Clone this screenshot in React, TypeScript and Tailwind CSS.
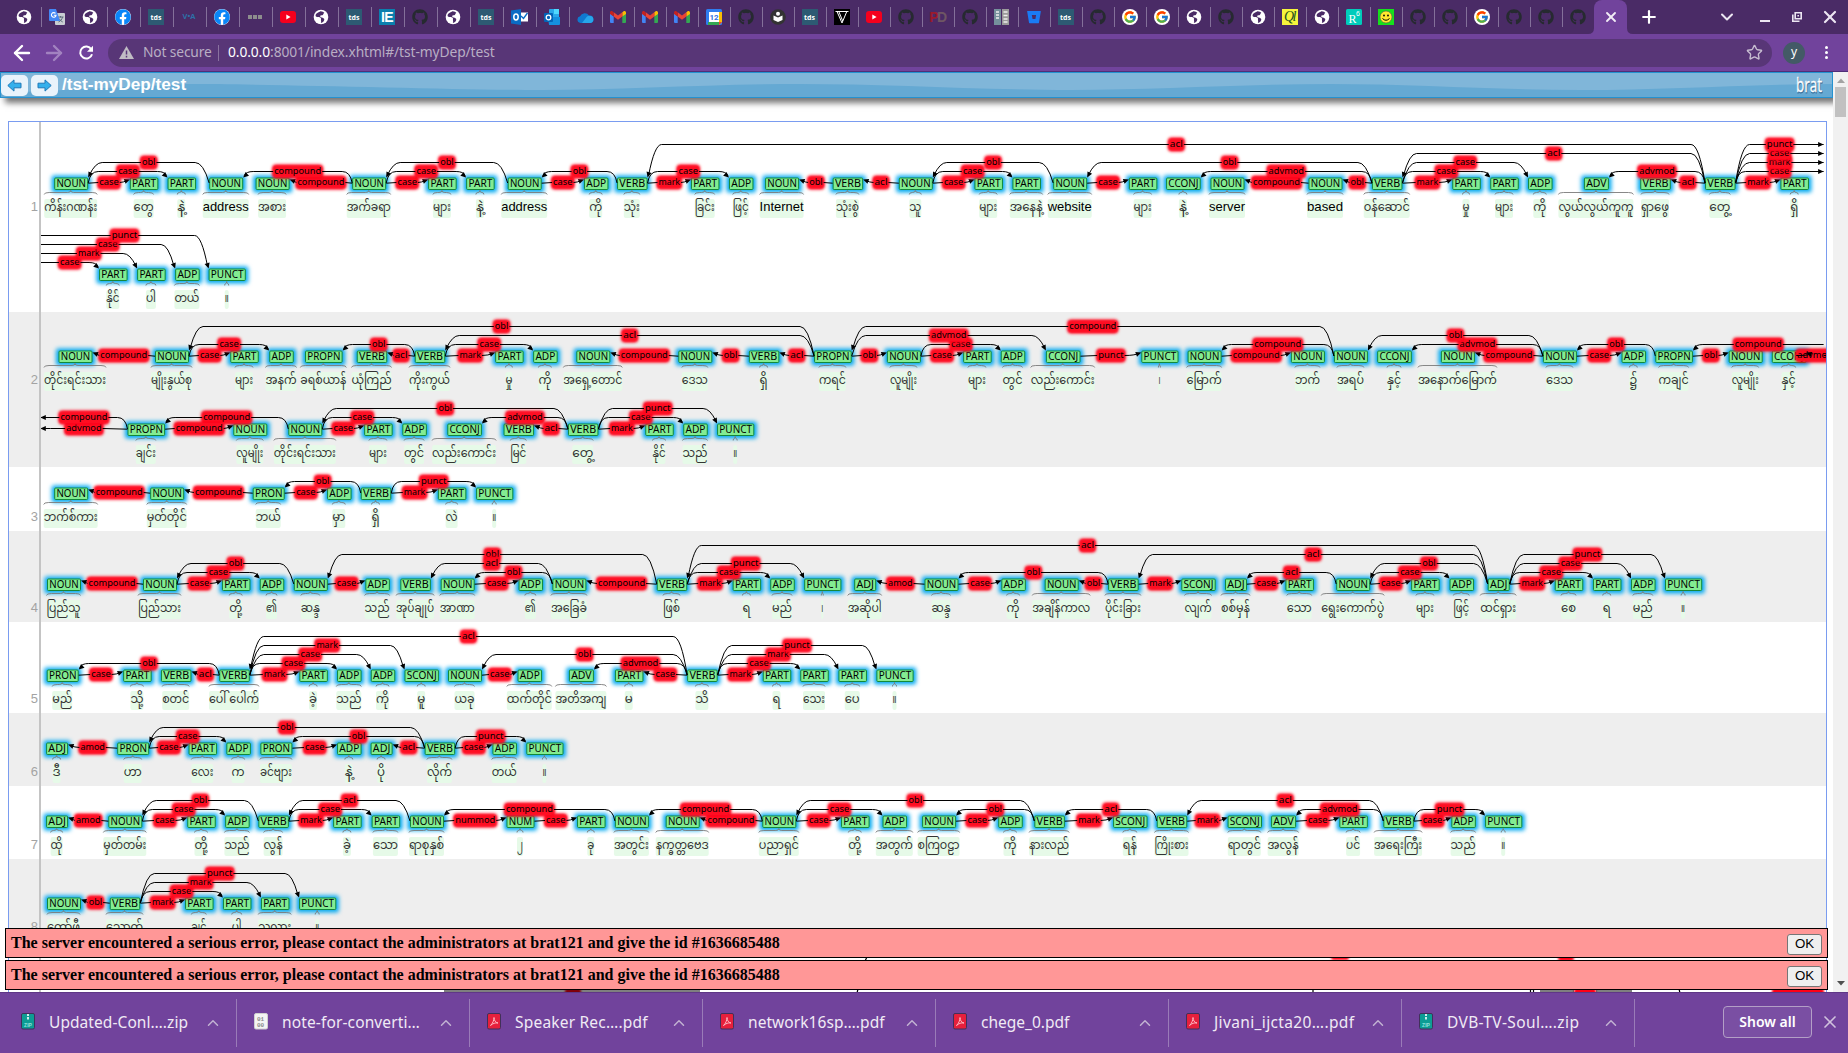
import React from "react";
import { FaGithub, FaFacebook, FaBitbucket } from "react-icons/fa";
import { FcGoogle } from "react-icons/fc";
import {
  ArrowLeft,
  ArrowRight,
  ChevronDown,
  ChevronUp,
  Plus,
  Star,
  X,
} from "lucide-react";

type Token = [tag: string, x: number, word: string, width: number];
type End = number | "L" | "R";
type Arc = [from: End, to: End, label: string, level: number];
type Line = { top: number; tokens: Token[]; arcs: Arc[] };
type Sentence = { n: number; top: number; height: number; lines: Line[] };

const TAG_W: Record<string, number> = {
  NOUN: 34, PART: 28.5, ADP: 24.5, VERB: 30.5, CCONJ: 34.6, PUNCT: 37.2, PROPN: 37.6,
  ADV: 25, PRON: 32, SCONJ: 34.4, ADJ: 22, NUM: 28,
};
const LABEL_W: Record<string, number> = {
  case: 19.5, obl: 13.5, compound: 47, mark: 21.5, acl: 13, advmod: 35.5, punct: 25.5, amod: 24.5, nummod: 40,
};
const LEFT = 40.3;
const RIGHT = 1823.6;

const SENTENCES: Sentence[] = [
  {
    n: 1, top: 122, height: 190,
    lines: [
      {
        top: 177,
        tokens: [
          ["NOUN", 71.2, "ကိန်းဂဏန်း", 53], ["PART", 144.1, "တွေ", 20], ["PART", 181.8, "နဲ့", 8],
          ["NOUN", 226.2, "address", 46], ["NOUN", 272.6, "အစား", 28], ["NOUN", 369.2, "အက်ခရာ", 44],
          ["PART", 442.4, "များ", 18], ["PART", 480.4, "နဲ့", 8], ["NOUN", 524.7, "address", 46],
          ["ADP", 596.2, "ကို", 13], ["VERB", 632.3, "သုံး", 16], ["PART", 705.2, "ခြင်း", 20],
          ["ADP", 741.2, "ဖြင့်", 16], ["NOUN", 782.1, "Internet", 44], ["VERB", 847.9, "သုံးစွဲ", 23],
          ["NOUN", 915.8, "သူ", 12], ["PART", 988.7, "များ", 18], ["PART", 1026.7, "အနေနဲ့", 33],
          ["NOUN", 1070.2, "website", 44], ["PART", 1143.1, "များ", 18], ["CCONJ", 1183.4, "နဲ့", 8],
          ["NOUN", 1227.5, "server", 36], ["NOUN", 1325.5, "based", 36], ["VERB", 1387.2, "ဝန်ဆောင်", 46],
          ["PART", 1466.5, "မှု", 7], ["PART", 1504.5, "များ", 18], ["ADP", 1540.3, "ကို", 13],
          ["ADV", 1596.4, "လွယ်လွယ်ကူကူ", 75], ["VERB", 1655.5, "ရှာဖွေ", 28], ["VERB", 1720.3, "တွေ့", 21],
          ["PART", 1794.7, "ရှိ", 8],
        ],
        arcs: [
          [0, 1, "case", 0], [0, 2, "case", 1], [3, 0, "obl", 2], [5, 4, "compound", 0], [5, 3, "compound", 1],
          [5, 6, "case", 0], [5, 7, "case", 1], [8, 5, "obl", 2], [8, 9, "case", 0], [10, 8, "obl", 1],
          [10, 11, "mark", 0], [10, 12, "case", 1], [14, 13, "obl", 0], [15, 14, "acl", 0], [15, 16, "case", 0],
          [15, 17, "case", 1], [18, 15, "obl", 2], [18, 19, "case", 0], [23, 22, "obl", 0], [22, 21, "compound", 0],
          [23, 20, "advmod", 1], [23, 18, "obl", 2], [23, 24, "mark", 0], [23, 25, "case", 1], [23, 26, "case", 2],
          [29, 23, "acl", 3], [29, 10, "acl", 4], [29, 28, "acl", 0], [29, 27, "advmod", 1], [29, 30, "mark", 0],
          [29, "R", "case", 1], [29, "R", "mark", 2], [29, "R", "case", 3], [29, "R", "punct", 4],
        ],
      },
      {
        top: 268,
        tokens: [["PART", 113.3, "နိုင်", 13], ["PART", 151.4, "ပါ", 10], ["ADP", 187.4, "တယ်", 25], ["PUNCT", 227.2, "။", 4]],
        arcs: [["L", 0, "case", 1], ["L", 1, "mark", 2], ["L", 2, "case", 3], ["L", 3, "punct", 4]],
      },
    ],
  },
  {
    n: 2, top: 312, height: 155,
    lines: [
      {
        top: 350,
        tokens: [
          ["NOUN", 75.5, "တိုင်းရင်းသား", 62], ["NOUN", 172, "မျိုးနွယ်စု", 41], ["PART", 244.5, "များ", 18],
          ["ADP", 281.5, "အနက်", 31], ["PROPN", 323.8, "ခရစ်ယာန်", 46], ["VERB", 372, "ယုံကြည်", 40],
          ["VERB", 430, "ကိုးကွယ်", 41], ["PART", 509.4, "မှု", 7], ["ADP", 545.4, "ကို", 13],
          ["NOUN", 593.3, "အရှေ့တောင်", 59], ["NOUN", 695.3, "ဒေသ", 26], ["VERB", 764.1, "ရှိ", 8],
          ["PROPN", 832.9, "ကရင်", 27], ["NOUN", 903.9, "လူမျိုး", 27], ["PART", 977.4, "များ", 18],
          ["ADP", 1013, "တွင်", 20], ["CCONJ", 1063.2, "လည်းကောင်း", 64], ["PUNCT", 1159.9, "၊", 2],
          ["NOUN", 1204.6, "မြောက်", 35], ["NOUN", 1307.9, "ဘက်", 25], ["NOUN", 1350.9, "အရပ်", 27],
          ["CCONJ", 1394.5, "နှင့်", 14], ["NOUN", 1457.9, "အနောက်မြောက်", 79], ["NOUN", 1559.9, "ဒေသ", 27],
          ["ADP", 1633.8, "၌", 8], ["PROPN", 1674.1, "ကချင်", 30], ["NOUN", 1745.7, "လူမျိုး", 27],
          ["CCONJ", 1789.1, "နှင့်", 14],
        ],
        arcs: [
          [1, 0, "compound", 0], [1, 2, "case", 0], [1, 3, "case", 1], [6, 5, "acl", 0], [6, 4, "obl", 1],
          [6, 7, "mark", 0], [6, 8, "case", 1], [12, 1, "obl", 3], [12, 6, "acl", 2], [10, 9, "compound", 0],
          [11, 10, "obl", 0], [12, 11, "acl", 0], [12, 13, "obl", 0], [13, 14, "case", 0], [13, 15, "case", 1],
          [12, 16, "advmod", 2], [16, 17, "punct", 0], [18, 19, "compound", 0], [20, 18, "compound", 1],
          [20, 12, "compound", 3], [23, 22, "compound", 0], [23, 21, "advmod", 1], [23, 20, "obl", 2],
          [23, 24, "case", 0], [25, 23, "obl", 1], [25, 26, "obl", 0], ["R", 25, "compound", 1],
          ["R", 27, "advmod", 0],
        ],
      },
      {
        top: 423,
        tokens: [
          ["PROPN", 146.3, "ချင်း", 20], ["NOUN", 250.3, "လူမျိုး", 27], ["NOUN", 305.3, "တိုင်းရင်းသား", 62],
          ["PART", 378.4, "များ", 18], ["ADP", 414.6, "တွင်", 20], ["CCONJ", 464.6, "လည်းကောင်း", 64],
          ["VERB", 518.8, "မြင်", 16], ["VERB", 583.2, "တွေ့", 21], ["PART", 659.5, "နိုင်", 13],
          ["ADP", 695.5, "သည်", 25], ["PUNCT", 735.7, "။", 4],
        ],
        arcs: [
          [0, "L", "advmod", 0], [0, "L", "compound", 1], [2, 0, "compound", 1], [0, 1, "compound", 0],
          [2, 3, "case", 0], [2, 4, "case", 1], [7, 2, "obl", 2], [7, 5, "advmod", 1], [7, 6, "acl", 0],
          [7, 8, "mark", 0], [7, 9, "case", 1], [7, 10, "punct", 2],
        ],
      },
    ],
  },
  {
    n: 3, top: 467, height: 64,
    lines: [
      {
        top: 487,
        tokens: [
          ["NOUN", 71.2, "ဘက်စ်ကား", 54], ["NOUN", 167.2, "မှတ်တိုင်", 40], ["PRON", 268.7, "ဘယ်", 25],
          ["ADP", 339.3, "မှာ", 13], ["VERB", 376, "ရှိ", 8], ["PART", 452.1, "လဲ", 12], ["PUNCT", 494.7, "။", 4],
        ],
        arcs: [
          [1, 0, "compound", 0], [2, 1, "compound", 0], [2, 3, "case", 0], [4, 2, "obl", 1], [4, 5, "mark", 0],
          [4, 6, "punct", 1],
        ],
      },
    ],
  },
  {
    n: 4, top: 531, height: 91,
    lines: [
      {
        top: 578,
        tokens: [
          ["NOUN", 64, "ပြည်သူ", 34], ["NOUN", 160, "ပြည်သား", 43], ["PART", 236.2, "တို့", 13], ["ADP", 272, "၏", 11],
          ["NOUN", 310.8, "ဆန္ဒ", 19], ["ADP", 377.6, "သည်", 25], ["VERB", 415.6, "အုပ်ချုပ်", 38],
          ["NOUN", 457.7, "အာဏာ", 35], ["ADP", 530.8, "၏", 11], ["NOUN", 569.4, "အခြေခံ", 36],
          ["VERB", 672, "ဖြစ်", 17], ["PART", 746.9, "ရ", 8], ["ADP", 782.5, "မည်", 20], ["PUNCT", 822.8, "၊", 2],
          ["ADJ", 865.2, "အဆိုပါ", 34], ["NOUN", 941.5, "ဆန္ဒ", 19], ["ADP", 1013.6, "ကို", 13],
          ["NOUN", 1061.7, "အချိန်ကာလ", 58], ["VERB", 1123.4, "ပိုင်းခြား", 36], ["SCONJ", 1198.5, "လျက်", 27],
          ["ADJ", 1236, "စစ်မှန်", 29], ["PART", 1299.7, "သော", 25], ["NOUN", 1353.2, "ရွေးကောက်ပွဲ", 63],
          ["PART", 1425.4, "များ", 18], ["ADP", 1461.8, "ဖြင့်", 16], ["ADJ", 1498.7, "ထင်ရှား", 36],
          ["PART", 1569, "စေ", 15], ["PART", 1607.2, "ရ", 8], ["ADP", 1643.3, "မည်", 20], ["PUNCT", 1683.6, "။", 4],
        ],
        arcs: [
          [1, 0, "compound", 0], [1, 2, "case", 0], [1, 3, "case", 1], [4, 1, "obl", 2], [4, 5, "case", 0],
          [10, 4, "obl", 3], [9, 6, "acl", 2], [9, 7, "obl", 1], [7, 8, "case", 0], [10, 9, "compound", 0],
          [10, 11, "mark", 0], [10, 12, "case", 1], [10, 13, "punct", 2], [15, 14, "amod", 0], [15, 16, "case", 0],
          [18, 15, "obl", 1], [18, 17, "obl", 0], [18, 19, "mark", 0], [20, 21, "case", 0], [22, 20, "acl", 1],
          [22, 23, "case", 0], [22, 24, "case", 1], [25, 22, "obl", 2], [25, 18, "acl", 3], [25, 10, "acl", 4],
          [25, 26, "mark", 0], [25, 27, "case", 1], [25, 28, "case", 2], [25, 29, "punct", 3],
        ],
      },
    ],
  },
  {
    n: 5, top: 622, height: 91,
    lines: [
      {
        top: 669,
        tokens: [
          ["PRON", 62.7, "မည်", 20], ["PART", 137.4, "သို့", 13], ["VERB", 176.2, "စတင်", 27],
          ["VERB", 234.5, "ပေါ် ပေါက်", 50], ["PART", 313.6, "ခဲ့", 8], ["ADP", 349.3, "သည်", 25],
          ["ADP", 383, "ကို", 13], ["SCONJ", 421.7, "မူ", 8], ["NOUN", 465, "ယခု", 20], ["ADP", 529.8, "ထက်တိုင်", 45],
          ["ADV", 581.4, "အတိအကျ", 51], ["PART", 629.2, "မ", 8], ["VERB", 702.4, "သိ", 13], ["PART", 777, "ရ", 8],
          ["PART", 814.5, "သေး", 22], ["PART", 852.7, "ပေ", 15], ["PUNCT", 895, "။", 4],
        ],
        arcs: [
          [0, 1, "case", 0], [3, 0, "obl", 1], [3, 2, "acl", 0], [3, 4, "mark", 0], [3, 5, "case", 1],
          [3, 6, "case", 2], [3, 7, "mark", 3], [12, 3, "acl", 4], [8, 9, "case", 0], [12, 8, "obl", 2],
          [12, 10, "advmod", 1], [12, 11, "case", 0], [12, 13, "mark", 0], [12, 14, "case", 1],
          [12, 15, "mark", 2], [12, 16, "punct", 3],
        ],
      },
    ],
  },
  {
    n: 6, top: 713, height: 73,
    lines: [
      {
        top: 742,
        tokens: [
          ["ADJ", 57.1, "ဒီ", 8], ["PRON", 133.2, "ဟာ", 18], ["PART", 202.8, "လေး", 22], ["ADP", 238.6, "က", 13],
          ["PRON", 276.4, "ခင်ဗျား", 32], ["ADP", 349.3, "နဲ့", 8], ["ADJ", 381.6, "ပို", 8],
          ["VERB", 439.9, "လိုက်", 25], ["ADP", 504.7, "တယ်", 25], ["PUNCT", 544.9, "။", 4],
        ],
        arcs: [
          [1, 0, "amod", 0], [1, 2, "case", 0], [1, 3, "case", 1], [7, 1, "obl", 2], [4, 5, "case", 0],
          [7, 4, "obl", 1], [7, 6, "acl", 0], [7, 8, "case", 0], [7, 9, "punct", 1],
        ],
      },
    ],
  },
  {
    n: 7, top: 786, height: 73,
    lines: [
      {
        top: 815,
        tokens: [
          ["ADJ", 57.1, "ထို", 12], ["NOUN", 125.3, "မှတ်တမ်း", 43], ["PART", 201.5, "တို့", 13],
          ["ADP", 237.4, "သည်", 25], ["VERB", 273.6, "လွန်", 19], ["PART", 347.4, "ခဲ့", 8], ["PART", 385.9, "သော", 25],
          ["NOUN", 427, "ရာစုနှစ်", 35], ["NUM", 520.5, "၂", 6], ["PART", 591.3, "ခု", 7], ["NOUN", 631.9, "အတွင်း", 35],
          ["NOUN", 682.7, "နက္ခတ္တဗေဒ", 53], ["NOUN", 779.3, "ပညာရှင်", 40], ["PART", 855.3, "တို့", 13],
          ["ADP", 894.8, "အတွက်", 37], ["NOUN", 939.1, "စကြဝဠာ", 42], ["ADP", 1010.5, "ကို", 13],
          ["VERB", 1049.6, "နားလည်", 40], ["SCONJ", 1130.3, "ရန်", 14], ["VERB", 1172, "ကြိုးစား", 34],
          ["SCONJ", 1244.8, "ရာတွင်", 33], ["ADV", 1283.6, "အလွန်", 31], ["PART", 1353.6, "ပင်", 14],
          ["VERB", 1398.6, "အရေးကြီး", 48], ["ADP", 1463.6, "သည်", 25], ["PUNCT", 1503.7, "။", 4],
        ],
        arcs: [
          [1, 0, "amod", 0], [1, 2, "case", 0], [1, 3, "case", 1], [4, 1, "obl", 2], [4, 5, "mark", 0],
          [4, 6, "case", 1], [7, 4, "acl", 2], [7, 8, "nummod", 0], [8, 9, "case", 0], [10, 7, "compound", 1],
          [12, 11, "compound", 0], [12, 10, "compound", 1], [12, 13, "case", 0], [12, 14, "case", 1],
          [17, 12, "obl", 2], [15, 16, "case", 0], [17, 15, "obl", 1], [17, 18, "mark", 0], [19, 17, "acl", 1],
          [19, 20, "mark", 0], [23, 19, "acl", 2], [23, 21, "advmod", 1], [21, 22, "case", 0], [23, 24, "case", 0],
          [23, 25, "punct", 1],
        ],
      },
    ],
  },
  {
    n: 8, top: 859, height: 82,
    lines: [
      {
        top: 897,
        tokens: [
          ["NOUN", 64, "ကော်ဖီ", 33], ["VERB", 125, "သောက်", 37], ["PART", 199.3, "ချင်", 15], ["PART", 237.2, "ပါ", 10],
          ["PART", 275.2, "သလား", 33], ["PUNCT", 317.7, "။", 4],
        ],
        arcs: [[1, 0, "obl", 0], [1, 2, "mark", 0], [1, 3, "case", 1], [1, 4, "mark", 2], [1, 5, "punct", 3]],
      },
    ],
  },
];

const TAG_FONT = '"Noto Sans", "Open Sans", sans-serif';
const WORD_FONT = '"Liberation Sans", "Noto Sans Myanmar", Padauk, sans-serif';
const ARROW_ANGLE = [-20, 42, 62, 70, 74];

function ArcShape({ arc, line }: { arc: Arc; line: Line }) {
  const [from, to, label, level] = arc;
  const centre = (e: End) => (e === "L" ? LEFT : e === "R" ? RIGHT : line.tokens[e][1]);
  const half = (e: End) => (typeof e === "number" ? TAG_W[line.tokens[e][0]] / 2 : 0);
  const dir = centre(to) > centre(from) ? 1 : -1;
  const x1 = centre(from) + dir * half(from);
  const x2 = centre(to) - dir * half(to);
  const mid = (x1 + x2) / 2;
  const lw = LABEL_W[label];
  const gap = lw / 2 + 1;
  const t = line.top;
  const y = level === 0 ? t + 5.5 : t - 5.5 - (level - 1) * 9;
  const flat = level === 1 ? 10 : 14;
  const startOpen = typeof from !== "number";
  const endOpen = typeof to !== "number";
  const ty = endOpen ? y : level === 0 ? t + 2.5 : t + 0.5;
  let head: string;
  let tail: string;
  if (level === 0) {
    tail = `M${x1} ${startOpen ? y : t + 6.2}L${mid - dir * gap} ${y}`;
    head = `M${mid + dir * gap} ${y}Q${x2 - dir * 7} ${y} ${x2 - dir * 2} ${ty + (endOpen ? 0 : 0.8)}`;
  } else {
    tail = startOpen
      ? `M${x1} ${y}H${mid - dir * gap}`
      : `M${x1} ${t + 6}Q${x1 + dir * (flat - 8)} ${y} ${x1 + dir * flat} ${y}H${mid - dir * gap}`;
    head = endOpen
      ? `M${mid + dir * gap} ${y}H${x2}`
      : `M${mid + dir * gap} ${y}H${x2 - dir * flat}Q${x2 - dir * (flat - 7)} ${y} ${x2 - dir} ${ty - 2}`;
  }
  const angle = endOpen ? 0 : ARROW_ANGLE[level];
  return (
    <g>
      <rect x={mid - lw / 2 - 2} y={y - 7} width={lw + 4} height={14} rx={4} fill="#ff0018" filter="url(#halo)" />
      <rect x={mid - lw / 2 - 1} y={y - 5.5} width={lw + 2} height={11} rx={3} fill="#ff0a20" filter="url(#soft)" />
      <path d={tail} fill="none" stroke="#000" />
      <path d={head} fill="none" stroke="#000" />
      <path d="M0 0L-5.5 -2.6V2.6Z" transform={`translate(${x2} ${ty}) scale(${dir} 1) rotate(${angle})`} />
      <text x={mid} y={y + 2.5} textAnchor="middle" fontSize={9.2} textLength={lw} lengthAdjust="spacingAndGlyphs" fontFamily={TAG_FONT}>
        {label}
      </text>
    </g>
  );
}

function TokenShape({ token, top }: { token: Token; top: number }) {
  const [tag, x, word, width] = token;
  const w = TAG_W[tag];
  const l = x - width / 2 - 0.5;
  const r = l + width;
  const c = (l + r) / 2;
  const b = top + 15.5;
  const k = Math.min(5, width / 4);
  const latin = /^[A-Za-z]/.test(word);
  return (
    <g>
      <rect x={l} y={top + 22} width={width} height={19} rx={2} fill="#e6fae8" />
      <rect x={x - w / 2 - 2.5} y={top - 1.5} width={w + 5} height={17} rx={2} fill="#00a8f0" filter="url(#glow)" />
      <rect x={x - w / 2 + 0.5} y={top + 1} width={w - 1} height={11.5} rx={1} fill="#83ec92" stroke="#12893a" />
      <text x={x} y={top + 10} textAnchor="middle" fontSize={10.4} textLength={w - 4.5} lengthAdjust="spacingAndGlyphs" fontFamily={TAG_FONT}>
        {tag}
      </text>
      <path
        d={`M${l} ${b + 2}Q${l} ${b} ${l + k} ${b}H${c - Math.min(3, k)}Q${c} ${b} ${c} ${b - 2}Q${c} ${b} ${c + Math.min(3, k)} ${b}H${r - k}Q${r} ${b} ${r} ${b + 2}`}
        fill="none"
        stroke="#7b7b7b"
        strokeWidth={0.9}
      />
      <text x={c} y={top + 34} textAnchor="middle" fontSize={13} textLength={width} lengthAdjust="spacingAndGlyphs" fontFamily={WORD_FONT} fill={latin ? "#000" : "#333"}>
        {word}
      </text>
    </g>
  );
}

function SentenceRow({ s }: { s: Sentence }) {
  return (
    <section className={s.n % 2 ? "bg-white" : "bg-[#eeeeee]"}>
      <svg className="block" width={1817} height={s.height} viewBox={`9 ${s.top} 1817 ${s.height}`}>
        {s.lines.map((line, i) => (
          <g key={i}>
            {line.tokens.map((tk, j) => (
              <TokenShape key={j} token={tk} top={line.top} />
            ))}
            {line.arcs.map((a, j) => (
              <ArcShape key={j} arc={a} line={line} />
            ))}
          </g>
        ))}
        <rect x={39} y={s.top} width={2} height={s.height} fill="#c4c4c4" />
        <text x={38} y={s.lines[0].top + 34} textAnchor="end" fontSize={13} fontFamily={WORD_FONT} fill="#a3a3a3">
          {s.n}
        </text>
      </svg>
    </section>
  );
}

function NextSentence() {
  return (
    <svg className="block" width={1817} height={52} viewBox="9 941 1817 52">
      <rect x={39} y={941} width={2} height={52} fill="#c4c4c4" />
      <g fill="#ff0018" filter="url(#soft)">
        <rect x={1331} y={955} width={18} height={5} rx={3} />
        <rect x={1558} y={956} width={16} height={5} rx={3} />
        <rect x={565} y={988} width={16} height={8} rx={3} />
        <rect x={1574} y={988} width={22} height={8} rx={3} />
        <rect x={1772} y={988} width={52} height={8} rx={3} />
      </g>
      <g stroke="#000" strokeWidth={1.2}>
        <path d="M444 991H700M1540 991H1574M1596 991H1632M867 957L865 961M858 989L857 993M1313 989V993M1530.500 989V993M1533.500 989V993M1679 989L1680 993" />
      </g>
    </svg>
  );
}

function Globe() {
  return (
    <svg width="16" height="16" viewBox="0 0 16 16">
      <circle cx="8" cy="8" r="7.300" fill="#fff" />
      <path d="M7.500 2.200C5.600 3 4.300 4 3 4.900c-.6 1.300-.6 2.200.3 2.900 1.500.7 3.200.2 4.300 1 .7.700.2 1.600.4 2.800.1.900.3 1.600-.2 2.300 2.100-.3 3.500-1.900 3.500-3.400 0-1.500-1.400-1.700-2.600-2.100-1.200-.3-1.900-.9-1.500-1.700.5-.7 1.800-.3 2.600-.8.9-.7.5-1.600 1.500-2.100-.7-.9-2.300-1.700-3.800-1.600Z" fill="#4a2b66" />
    </svg>
  );
}

function GmailIcon() {
  return (
    <svg width="16" height="12" viewBox="0 0 16 12">
      <path d="M0 2v9q0 1 1 1h2.700V5.500Z" fill="#4285f4" />
      <path d="M16 2v9q0 1-1 1h-2.700V5.500Z" fill="#34a853" />
      <path d="M12.300 1.200V5.500L16 3V1.600C16 .2 14.400-.4 13.400.4Z" fill="#fbbc04" />
      <path d="M3.700 5.500V1.200L8 4.500l4.300-3.300v4.300L8 8.700Z" fill="#ea4335" />
      <path d="M0 1.600V3l3.700 2.500V1.200L2.600.4C1.600-.4 0 .2 0 1.600Z" fill="#c5221f" />
    </svg>
  );
}

function TabIcon({ kind }: { kind: string }) {
  switch (kind) {
    case "globe":
      return <Globe />;
    case "gh":
      return <FaGithub size={16} color="#262a30" />;
    case "fb":
      return (
        <span className="flex size-4 items-center justify-center rounded-full bg-white">
          <FaFacebook size={16} color="#0a86f8" />
        </span>
      );
    case "yt":
      return (
        <svg width="16" height="12" viewBox="0 0 16 12">
          <rect width="16" height="12" rx="3" fill="#f5001d" />
          <path d="M6.300 3.500v5L10.600 6Z" fill="#fff" />
        </svg>
      );
    case "g":
      return (
        <span className="flex size-4 items-center justify-center rounded-full bg-white">
          <FcGoogle size={14} />
        </span>
      );
    case "gmail":
      return <GmailIcon />;
    case "tds":
      return (
        <span className="flex size-4 items-center justify-center bg-[#2d5a73] font-['Open_Sans'] text-[7px] font-bold leading-none text-white">tds</span>
      );
    case "voa":
      return <span className="font-['Open_Sans'] text-[7.500px] font-bold leading-none text-[#2d70a8]">V•A</span>;
    case "dots":
      return (
        <span className="flex gap-px">
          <i className="size-1 bg-[#8d8d8d]" />
          <i className="size-1 bg-[#8d8d8d]" />
          <i className="size-1 bg-[#8d8d8d]" />
        </span>
      );
    case "translate":
      return (
        <svg width="16" height="16" viewBox="0 0 16 16">
          <rect x="6" y="4" width="10" height="12" rx="1" fill="#c9cdd2" />
          <path d="M8.500 8h6M11.500 7v1.500M13.500 8c-.5 2.500-2 4-4 5M10 9.500c.8 1.500 2 2.500 3.700 3.500" stroke="#5c6b7a" fill="none" />
          <path d="M1 0h6l4 12H1q-1 0-1-1V1q0-1 1-1Z" fill="#4387f5" />
          <path d="M6.500 4.400A2.300 2.300 0 1 0 7 6.300H4.800" stroke="#fff" strokeWidth="1.100" fill="none" />
        </svg>
      );
    case "ie":
      return (
        <span className="flex size-4 items-center justify-center bg-[#0b7fae] font-['Liberation_Sans'] text-[14px] font-bold leading-none tracking-tighter text-white">IE</span>
      );
    case "outlook1":
      return (
        <svg width="17" height="16" viewBox="0 0 17 16">
          <rect x="8" y="3.500" width="9" height="9" fill="#fff" />
          <path d="M10 7l2.500 2.500L16.500 4" stroke="#0a6cc4" strokeWidth="1.400" fill="none" />
          <path d="M0 1.500L10 0v16L0 14.500Z" fill="#0a6cc4" />
          <ellipse cx="5" cy="8" rx="2.200" ry="2.900" stroke="#fff" strokeWidth="1.500" fill="none" />
        </svg>
      );
    case "outlook2":
      return (
        <svg width="16" height="16" viewBox="0 0 16 16">
          <rect x="5" y="0" width="10" height="9" rx="1" fill="#28a8ea" />
          <path d="M10 0h5v5h-5Z" fill="#50d9ff" />
          <path d="M4 8h12v7q0 1-1 1H5Z" fill="#1490df" />
          <rect x="0" y="4" width="9" height="9" rx="1" fill="#0364b8" />
          <circle cx="4.500" cy="8.500" r="2.300" stroke="#fff" strokeWidth="1.300" fill="none" />
        </svg>
      );
    case "onedrive":
      return (
        <svg width="17" height="11" viewBox="0 0 17 11">
          <path d="M3.500 11a3.400 3.400 0 0 1-.4-6.700A5 5 0 0 1 12 3.500a3.800 3.800 0 0 1 1.300 7.500Z" fill="#0f79cf" />
          <path d="M5 11l5-6.500a3.800 3.800 0 0 1 3.300-.4A3.500 3.500 0 0 1 13.500 11Z" fill="#27a6ea" />
        </svg>
      );
    case "cal":
      return (
        <svg width="16" height="16" viewBox="0 0 16 16">
          <rect width="16" height="16" rx="1.500" fill="#2f7df0" />
          <path d="M13 3h3v10l-3 3Z" fill="#fbbc04" />
          <path d="M2 13h11v3H2Z" fill="#34a853" />
          <path d="M13 13h3l-3 3Z" fill="#ea4335" />
          <rect x="3" y="3" width="10" height="10" fill="#fff" />
          <text x="8" y="11" textAnchor="middle" fontSize="8" fontWeight="700" fontFamily="Roboto, sans-serif" fill="#2f6fe0">12</text>
        </svg>
      );
    case "reader":
      return (
        <svg width="16" height="16" viewBox="0 0 16 16">
          <circle cx="8" cy="8" r="7.800" fill="#333" />
          <circle cx="8" cy="4.800" r="2" fill="#fff" />
          <path d="M3.500 6.500L8 8.500l4.500-2V11L8 13l-4.500-2Z" fill="#fff" />
        </svg>
      );
    case "v":
      return (
        <svg width="16" height="16" viewBox="0 0 16 16">
          <rect width="16" height="16" fill="#000" />
          <path d="M1.500 2.500h13M3 2.500L8 14l4.800-11.500M4.800 2.500L8.700 12" stroke="#fff" fill="none" />
        </svg>
      );
    case "pd":
      return (
        <span className="font-['Liberation_Sans'] text-[14px] font-bold leading-none tracking-[-1.500px] text-[#6e5663]">
          <span className="text-[#9c1a2c]">P</span>D
        </span>
      );
    case "news":
      return (
        <svg width="15" height="16" viewBox="0 0 15 16">
          <rect width="7" height="16" fill="#75909c" />
          <rect x="8" width="7" height="16" fill="#9a9a9a" />
          <path d="M2 3h3M2 6h3M2 9h3M9.500 3h4M9.500 6.500h4M9.500 10h4M9.500 13h4" stroke="#eee" strokeWidth="1.500" />
        </svg>
      );
    case "bb":
      return <FaBitbucket size={14} color="#1a7bf5" />;
    case "ql":
      return (
        <span className="flex size-4 items-center justify-center bg-[#f6f43c] font-['Liberation_Serif'] text-[14px] italic leading-none tracking-[-1.500px] text-[#24501c]">Ql</span>
      );
    case "rg":
      return (
        <svg width="16" height="16" viewBox="0 0 16 16">
          <rect width="16" height="16" rx="1.500" fill="#00ccbb" />
          <text x="2.500" y="13.500" fontSize="12" fontFamily="Liberation Serif, serif" fill="#fff">R</text>
          <text x="10" y="7" fontSize="7" fontFamily="Liberation Sans, sans-serif" fill="#fff">6</text>
        </svg>
      );
    default:
      return (
        <svg width="16" height="16" viewBox="0 0 16 16">
          <rect width="16" height="16" fill="#16e01c" />
          <circle cx="8" cy="8" r="6" fill="#ffe92e" stroke="#555" strokeWidth="0.600" />
          <circle cx="6" cy="6.500" r="0.900" />
          <circle cx="10" cy="6.500" r="0.900" />
          <path d="M4.500 9.500q3.500 3.500 7 0" stroke="#000" fill="none" />
        </svg>
      );
  }
}

const TABS =
  "globe translate globe fb tds voa fb dots yt globe tds ie gh globe tds outlook1 outlook2 onedrive gmail gmail gmail cal gh reader tds v yt gh pd gh news bb tds gh g g globe gh globe ql globe rg smile gh gh g gh gh gh".split(" ");

function TabStrip() {
  return (
    <div className="flex h-[34px] items-stretch bg-[#4a2b66] pl-[9px]">
      {TABS.map((kind, i) => (
        <div key={i} className={`flex shrink-0 items-center justify-center ${i < 18 ? "w-[33px]" : "w-8"}`}>
          <span className="flex flex-1 items-center justify-center pr-0.5">
            <TabIcon kind={kind} />
          </span>
          {i < TABS.length - 1 && <i className="h-5 w-px bg-[#84709a]" />}
        </div>
      ))}
      <div className="relative -ml-px flex w-[33px] items-center justify-center rounded-t-lg bg-[#71439c] text-[#f1ecf5]">
        <svg className="absolute -left-1.5 bottom-0" width="6" height="6">
          <path d="M6 0Q6 6 0 6H6Z" fill="#71439c" />
        </svg>
        <svg className="absolute -right-1.5 bottom-0" width="6" height="6">
          <path d="M0 0Q0 6 6 6H0Z" fill="#71439c" />
        </svg>
        <X size={16} strokeWidth={2.8} />
      </div>
      <div className="flex flex-1 items-center pl-3 text-white">
        <Plus size={20} strokeWidth={2.6} />
        <div className="ml-auto flex items-center text-[#ece6f2]">
          <ChevronDown size={20} strokeWidth={2.4} className="mr-[23px]" />
          <i className="mr-[22px] mt-2 h-0.5 w-[10px] bg-[#ece6f2]" />
          <svg width="10" height="10" viewBox="0 0 10 10" className="mr-[18px]" fill="none" stroke="#ece6f2" strokeWidth="1.600">
            <path d="M3.200 .8H9.200V6.800H3.200ZM.8 2.500V9.200H7.500M5.400 3.800H7" />
          </svg>
          <X size={20} strokeWidth={2.6} className="mr-2" />
        </div>
      </div>
    </div>
  );
}

function Toolbar() {
  return (
    <div className="flex h-[38px] items-center border-b border-[#4f2f78] bg-[#71439c] font-['Noto_Sans']">
      <ArrowLeft size={24} strokeWidth={2.4} className="ml-[10px] text-white" />
      <ArrowRight size={24} strokeWidth={2.4} className="ml-2 text-[#a283c0]" />
      <svg width="16" height="16" viewBox="0 0 16 16" className="ml-3">
        <path d="M13.300 4.300A6 6 0 1 0 14 9.200" fill="none" stroke="#fff" strokeWidth="2" />
        <path d="M15 .8v6H9Z" fill="#fff" />
      </svg>
      <div className="ml-[14px] flex h-7 w-[1664px] items-center rounded-full bg-[#583677] pl-[11px] pr-[9px] text-[13.800px] text-[#b9aec4]">
        <svg width="15" height="13" viewBox="0 0 15 13">
          <path d="M7.500 0L15 13H0Z" fill="#c0bcc4" />
          <path d="M7.500 4.500v4M7.500 9.800v1.600" stroke="#583677" strokeWidth="1.500" />
        </svg>
        <span className="ml-[9px] w-[68px] whitespace-nowrap tracking-[-0.150px]">Not secure</span>
        <i className="ml-[7px] mr-[9px] h-4 w-px bg-[#8a729f]" />
        <span className="whitespace-nowrap tracking-[-0.090px]">
          <span className="text-white">0.0.0.0</span>:8001/index.xhtml#/tst-myDep/test
        </span>
        <Star size={17} className="ml-auto text-[#c6bcd0]" />
      </div>
      <span className="ml-[11px] flex size-[22px] items-center justify-center rounded-full bg-[#435a66] pb-0.5 text-[12px] leading-none text-white">y</span>
      <span className="ml-[20px] flex flex-col gap-[2px]">
        <i className="size-[3px] rounded-full bg-white" />
        <i className="size-[3px] rounded-full bg-white" />
        <i className="size-[3px] rounded-full bg-white" />
      </span>
    </div>
  );
}

function NavArrow({ flip }: { flip?: boolean }) {
  return (
    <span className="flex h-[21px] w-[27px] items-center justify-center rounded-[5px] bg-[#e9f3fb]">
      <svg width="15" height="13" viewBox="0 0 15 13" className={flip ? "-scale-x-100" : ""}>
        <path d="M.8 6.500L7 .9v3.300h7v4.600H7v3.300Z" fill="#35b0ec" stroke="#1f78b8" strokeWidth="1" />
      </svg>
    </span>
  );
}

function BratHeader() {
  return (
    <header className="relative z-10 flex h-[26px] items-center border border-[#2592d0] bg-[#65a9d3] shadow-[5px_5px_6px_#777]">
      <svg className="absolute inset-0" width="1831" height="24" viewBox="0 0 1831 24">
        <path
          d="M0 0H1831V11C1745 11 1665 17 1580 17S1415 11 1330 11S1155 17 1070 17S885 11 800 11S620 17 540 17S270 11 186 11L0 20Z"
          fill="#80b6d9"
        />
      </svg>
      <div className="relative flex w-full items-center gap-[3px]">
        <NavArrow />
        <NavArrow flip />
        <span className="ml-[1px] font-['Liberation_Sans'] text-[17.200px] font-bold leading-none text-white">/tst-myDep/test</span>
        <svg className="ml-auto mr-[8px]" width="30" height="22" viewBox="0 0 30 22">
          <text x="2.500" y="18.500" fontSize="20" textLength="26" lengthAdjust="spacingAndGlyphs" fontFamily="Open Sans, sans-serif" fill="#1c4f7f" stroke="#1c4f7f" opacity="0.600">brat</text>
          <text x="2" y="17.500" fontSize="20" textLength="26" lengthAdjust="spacingAndGlyphs" fontFamily="Open Sans, sans-serif" fill="#fff" stroke="#fff" strokeWidth="0.300">brat</text>
        </svg>
      </div>
    </header>
  );
}

function ErrorBar() {
  return (
    <div className="flex h-[30px] items-center justify-between border border-black bg-[#ff9797] pl-[5px] pr-[5px]">
      <span className="font-['Liberation_Serif'] text-[16px] font-bold leading-none text-black">
        The server encountered a serious error, please contact the administrators at brat121 and give the id #1636685488
      </span>
      <button className="mt-0.5 h-[21px] w-[35px] rounded-[3px] border border-[#767676] bg-[#efefef] font-['Liberation_Sans'] text-[13.300px] leading-none text-black">OK</button>
    </div>
  );
}

const FILES = [
  { name: "Updated-Conl….zip", kind: "zip", spacing: "tracking-[0.070px]" },
  { name: "note-for-converti…", kind: "bin", spacing: "tracking-[0.130px]" },
  { name: "Speaker Rec….pdf", kind: "pdf", spacing: "tracking-[0.200px]" },
  { name: "network16sp….pdf", kind: "pdf", spacing: "tracking-[0.060px]" },
  { name: "chege_0.pdf", kind: "pdf", spacing: "tracking-normal" },
  { name: "Jivani_ijcta20….pdf", kind: "pdf", spacing: "tracking-[0.360px]" },
  { name: "DVB-TV-Soul….zip", kind: "zip", spacing: "tracking-[0.360px]" },
];

function FileIcon({ kind }: { kind: string }) {
  return (
    <svg width="14" height="17" viewBox="0 0 14 17" className="-mt-[3px] shrink-0">
      <rect x="0.500" y="0.500" width="13" height="15.500" rx="1.500" fill={kind === "pdf" ? "#e6203c" : kind === "zip" ? "#0d9c94" : "#f4f4f4"} stroke={kind === "bin" ? "#d0d0d0" : "#41305a"} />
      {kind === "pdf" && <path d="M3.500 12.500C6 10 7 7 7 4.500c0 3 1.500 5 4 5.500-3-.5-5 .5-7.500 2.500Z" fill="none" stroke="#ffc4cc" strokeWidth="0.900" />}
      {kind === "zip" && (
        <>
          <path d="M7 1v2M7 4v2.500" stroke="#fff" strokeWidth="1.600" />
          <text x="7" y="13.500" textAnchor="middle" fontSize="5" fontWeight="700" fontFamily="Liberation Sans, sans-serif" fill="#8fe0dc">ZIP</text>
        </>
      )}
      {kind === "bin" && (
        <g fontSize="6" fontWeight="700" fontFamily="Liberation Mono, monospace" fill="#8a8a8a">
          <text x="3" y="7.500">01</text>
          <text x="3" y="14">00</text>
        </g>
      )}
    </svg>
  );
}

function DownloadBar() {
  return (
    <footer className="flex h-[61px] items-center border-t border-[#5f3787] bg-[#71439c] pl-1 font-['Noto_Sans']">
      {FILES.map((f) => (
        <div key={f.name} className="flex h-12 w-[233px] shrink-0 items-center border-r border-[#9a7bb8] pl-[17px] pr-[14px]">
          <FileIcon kind={f.kind} />
          <span className={`ml-[14px] whitespace-nowrap text-[15.500px] leading-none text-[#f0eaf5] ${f.spacing}`}>{f.name}</span>
          <ChevronUp size={18} className="ml-auto shrink-0 text-[#c2b2d2]" />
        </div>
      ))}
      <button className="mb-0.5 ml-auto h-8 w-[89px] rounded-[4px] border border-[#b39fc6] bg-[#7a4fa3] text-[14px] font-semibold leading-none text-white">
        Show all
      </button>
      <X size={20} className="mb-0.5 ml-2 mr-2 text-[#d0c2dd]" />
    </footer>
  );
}

export default function App() {
  return (
    <div className="flex h-[1053px] w-[1848px] flex-col overflow-hidden bg-white">
      <TabStrip />
      <Toolbar />
      <div className="relative flex h-[920px] overflow-hidden bg-white">
        <div className="h-full w-[1833px] overflow-hidden">
          <BratHeader />
          <main className="ml-2 mt-[23px] w-[1819px] border border-[#7a9cf0] bg-white">
            <svg className="absolute" width="0" height="0">
              <defs>
                <filter id="glow" x="-50%" y="-80%" width="200%" height="260%">
                  <feGaussianBlur stdDeviation="1.900" />
                </filter>
                <filter id="halo" x="-50%" y="-80%" width="200%" height="260%">
                  <feGaussianBlur stdDeviation="1.500" />
                </filter>
                <filter id="soft" x="-30%" y="-50%" width="160%" height="200%">
                  <feGaussianBlur stdDeviation="0.900" />
                </filter>
              </defs>
            </svg>
            {SENTENCES.map((s) => (
              <SentenceRow key={s.n} s={s} />
            ))}
            <NextSentence />
          </main>
        </div>
        <div className="flex w-[15px] flex-col items-center justify-between bg-[#f1f1f1]">
          <div className="flex flex-col items-center">
            <svg width="8" height="5" viewBox="0 0 8 5" className="mt-1.5">
              <path d="M0 5L4 0.500 8 5Z" fill="#a3a3a3" />
            </svg>
            <i className="mt-1 h-[30px] w-[11px] bg-[#c1c1c1]" />
          </div>
          <svg width="8" height="5" viewBox="0 0 8 5" className="mb-1.5">
            <path d="M0 0L4 4.500 8 0Z" fill="#505050" />
          </svg>
        </div>
        <div className="absolute bottom-0.5 left-[5px] z-20 flex w-[1823px] flex-col gap-0.5">
          <ErrorBar />
          <ErrorBar />
        </div>
      </div>
      <DownloadBar />
    </div>
  );
}
